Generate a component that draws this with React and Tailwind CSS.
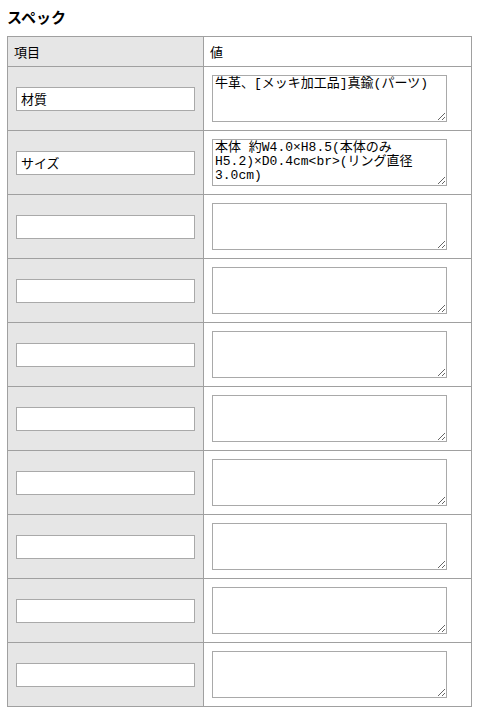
import React from 'react';

const specs = [
    { label: '材質', value: '牛革、[メッキ加工品]真鍮(パーツ)' },
    { label: 'サイズ', value: '本体 約W4.0×H8.5(本体のみH5.2)×D0.4cm<br>(リング直径3.0cm)' },
    { label: '', value: '' },
    { label: '', value: '' },
    { label: '', value: '' },
    { label: '', value: '' },
    { label: '', value: '' },
    { label: '', value: '' },
    { label: '', value: '' },
    { label: '', value: '' },
];

const App = () => {
    return (
        <div className="px-[7px] pt-[7px] pb-2 bg-white text-black font-['Noto_Sans_CJK_JP',sans-serif]">
            {/* Section title */}
            <h2 className="text-[15px] leading-[20px] font-bold mb-[9px]">スペック</h2>

            <table className="border-collapse w-[465px] text-[13px]">
                <thead>
                    <tr className="h-[30px]">
                        <th className="w-[196px] bg-[#e6e6e6] border border-[#a0a0a0] px-[6px] text-left font-normal">項目</th>
                        <th className="bg-white border border-[#a0a0a0] px-[6px] text-left font-normal">値</th>
                    </tr>
                </thead>
                <tbody>
                    {specs.map((row, i) => (
                        <tr key={i}>
                            <td className="bg-[#e6e6e6] border border-[#a0a0a0] px-[8px] align-middle">
                                <input
                                    type="text"
                                    defaultValue={row.label}
                                    className="block w-[179px] h-[24px] px-[4px] border border-[#a9a9a9] bg-white text-[13px] outline-none"
                                />
                            </td>
                            <td className="border border-[#a0a0a0] pl-[8px] pt-[8px] pb-[8px] align-top">
                                <textarea
                                    defaultValue={row.value}
                                    className="block w-[235px] h-[47px] pl-[2px] pr-[14px] py-[1px] border border-[#a9a9a9] bg-white text-[13px] leading-[14px] font-['Liberation_Mono','Noto_Sans_CJK_JP',monospace] outline-none"
                                />
                            </td>
                        </tr>
                    ))}
                </tbody>
            </table>
        </div>
    );
};

export default App;
